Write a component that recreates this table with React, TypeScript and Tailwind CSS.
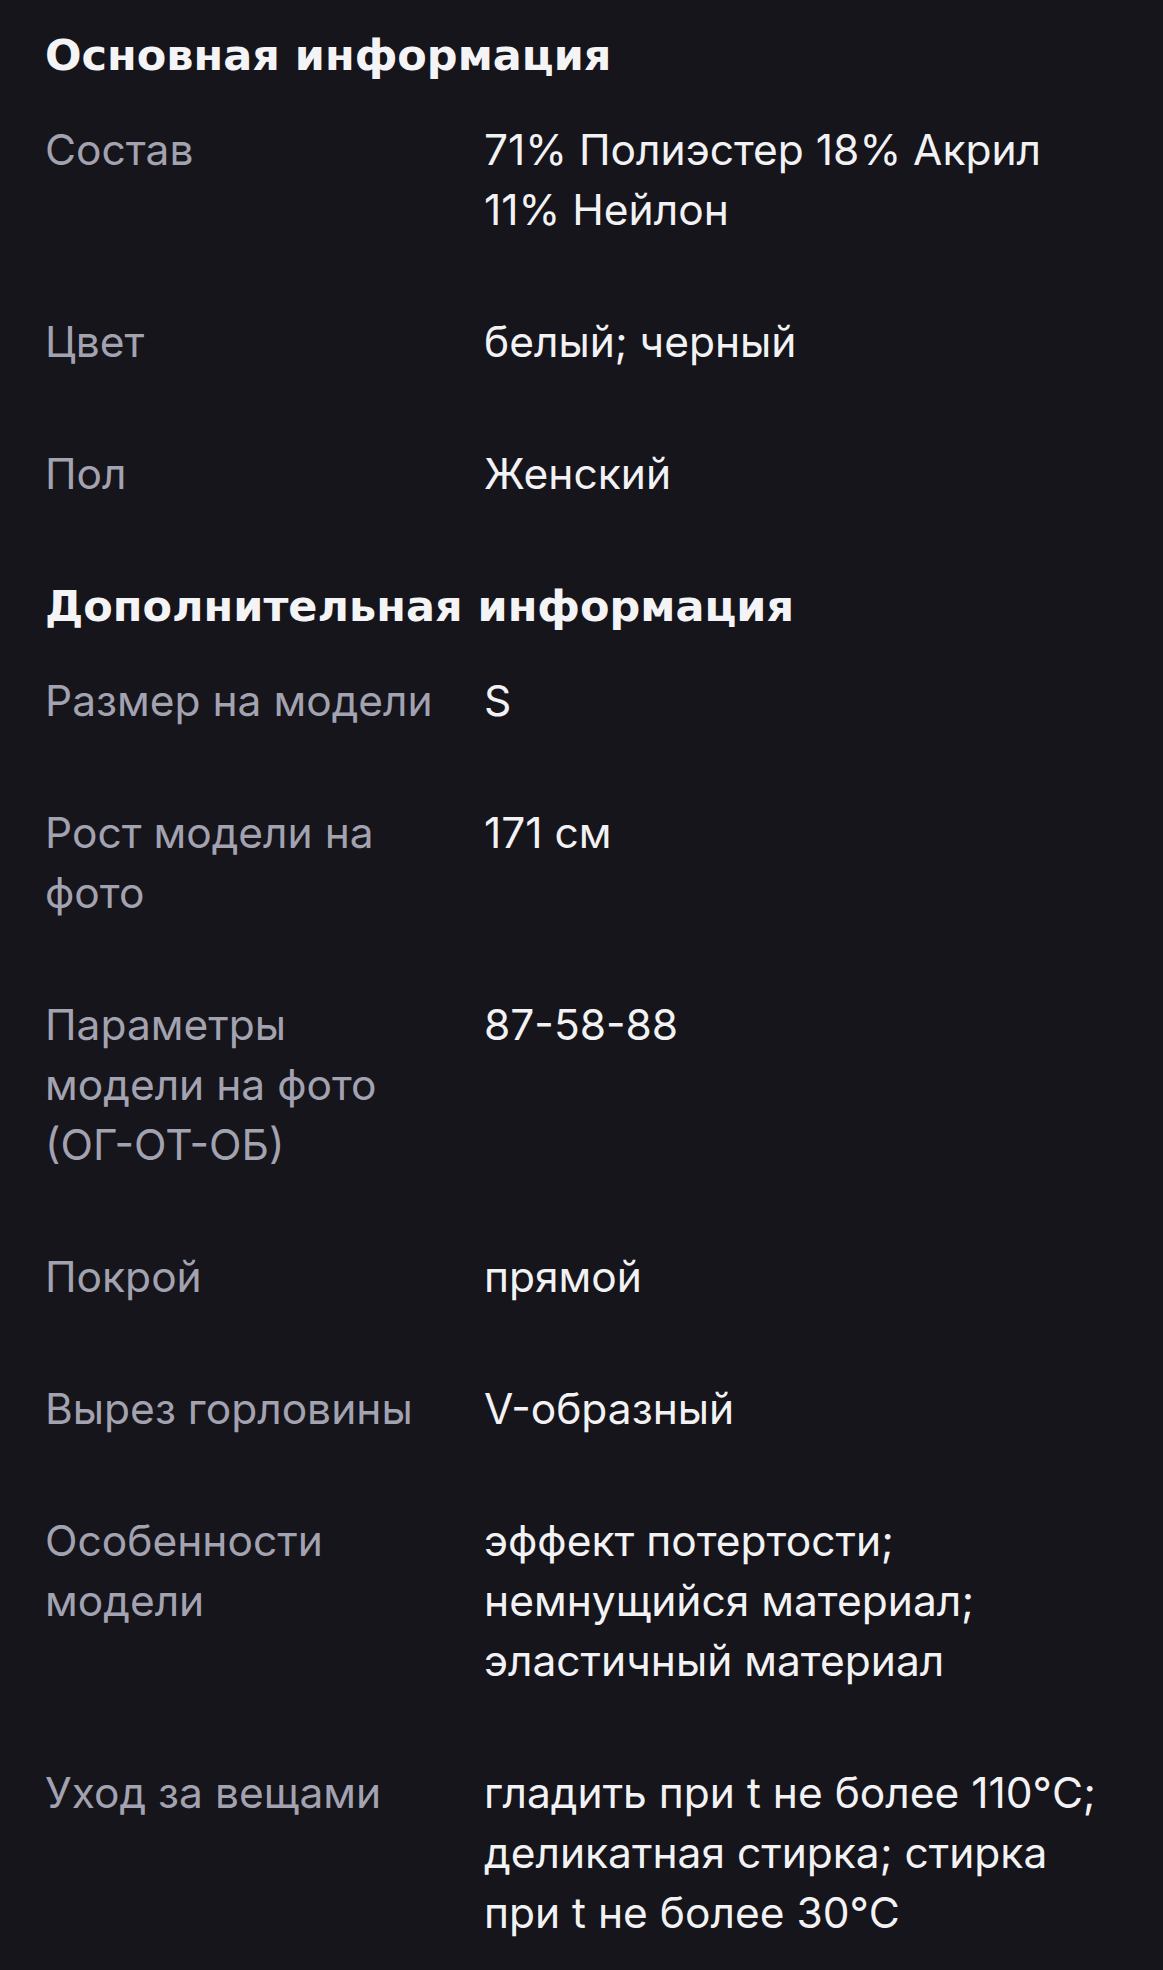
import React from "react";

type Row = { label: string[]; value: string[] };

const main: Row[] = [
  { label: ["Состав"], value: ["71% Полиэстер 18% Акрил", "11% Нейлон"] },
  { label: ["Цвет"], value: ["белый; черный"] },
  { label: ["Пол"], value: ["Женский"] },
];

const extra: Row[] = [
  { label: ["Размер на модели"], value: ["S"] },
  { label: ["Рост модели на", "фото"], value: ["171 см"] },
  { label: ["Параметры", "модели на фото", "(ОГ-ОТ-ОБ)"], value: ["87-58-88"] },
  { label: ["Покрой"], value: ["прямой"] },
  { label: ["Вырез горловины"], value: ["V-образный"] },
  {
    label: ["Особенности", "модели"],
    value: ["эффект потертости;", "немнущийся материал;", "эластичный материал"],
  },
  {
    label: ["Уход за вещами"],
    value: ["гладить при t не более 110°C;", "деликатная стирка; стирка", "при t не более 30°C"],
  },
];

function Section({ title, rows }: { title: string; rows: Row[] }) {
  return (
    <section className="flex flex-col">
      <h2
        className="text-[43px] leading-[60px] font-bold text-[#f4f4f6] mb-[35px] whitespace-nowrap"
        style={{ fontFamily: "'DejaVu Sans', 'Open Sans', sans-serif" }}
      >
        {title}
      </h2>
      <div className="flex flex-col gap-[72px]">
        {rows.map((r, i) => (
          <div key={i} className="flex">
            <div className="w-[439px] shrink-0 text-[#a3a2b0]">
              {r.label.map((l, j) => (
                <div key={j} className="whitespace-nowrap">{l}</div>
              ))}
            </div>
            <div className="flex-1 text-[#f2f2f4]">
              {r.value.map((l, j) => (
                <div key={j} className="whitespace-nowrap">{l}</div>
              ))}
            </div>
          </div>
        ))}
      </div>
    </section>
  );
}

export default function App() {
  return (
    <div
      className="min-h-[1970px] w-full bg-[#16151b] px-[45px] pt-[25px] pb-[25px] text-[42.5px] leading-[60px]"
      style={{ fontFamily: "Inter, 'Noto Sans', sans-serif" }}
    >
      <div className="flex flex-col gap-[72px]">
        <Section title="Основная информация" rows={main} />
        <Section title="Дополнительная информация" rows={extra} />
      </div>
    </div>
  );
}
